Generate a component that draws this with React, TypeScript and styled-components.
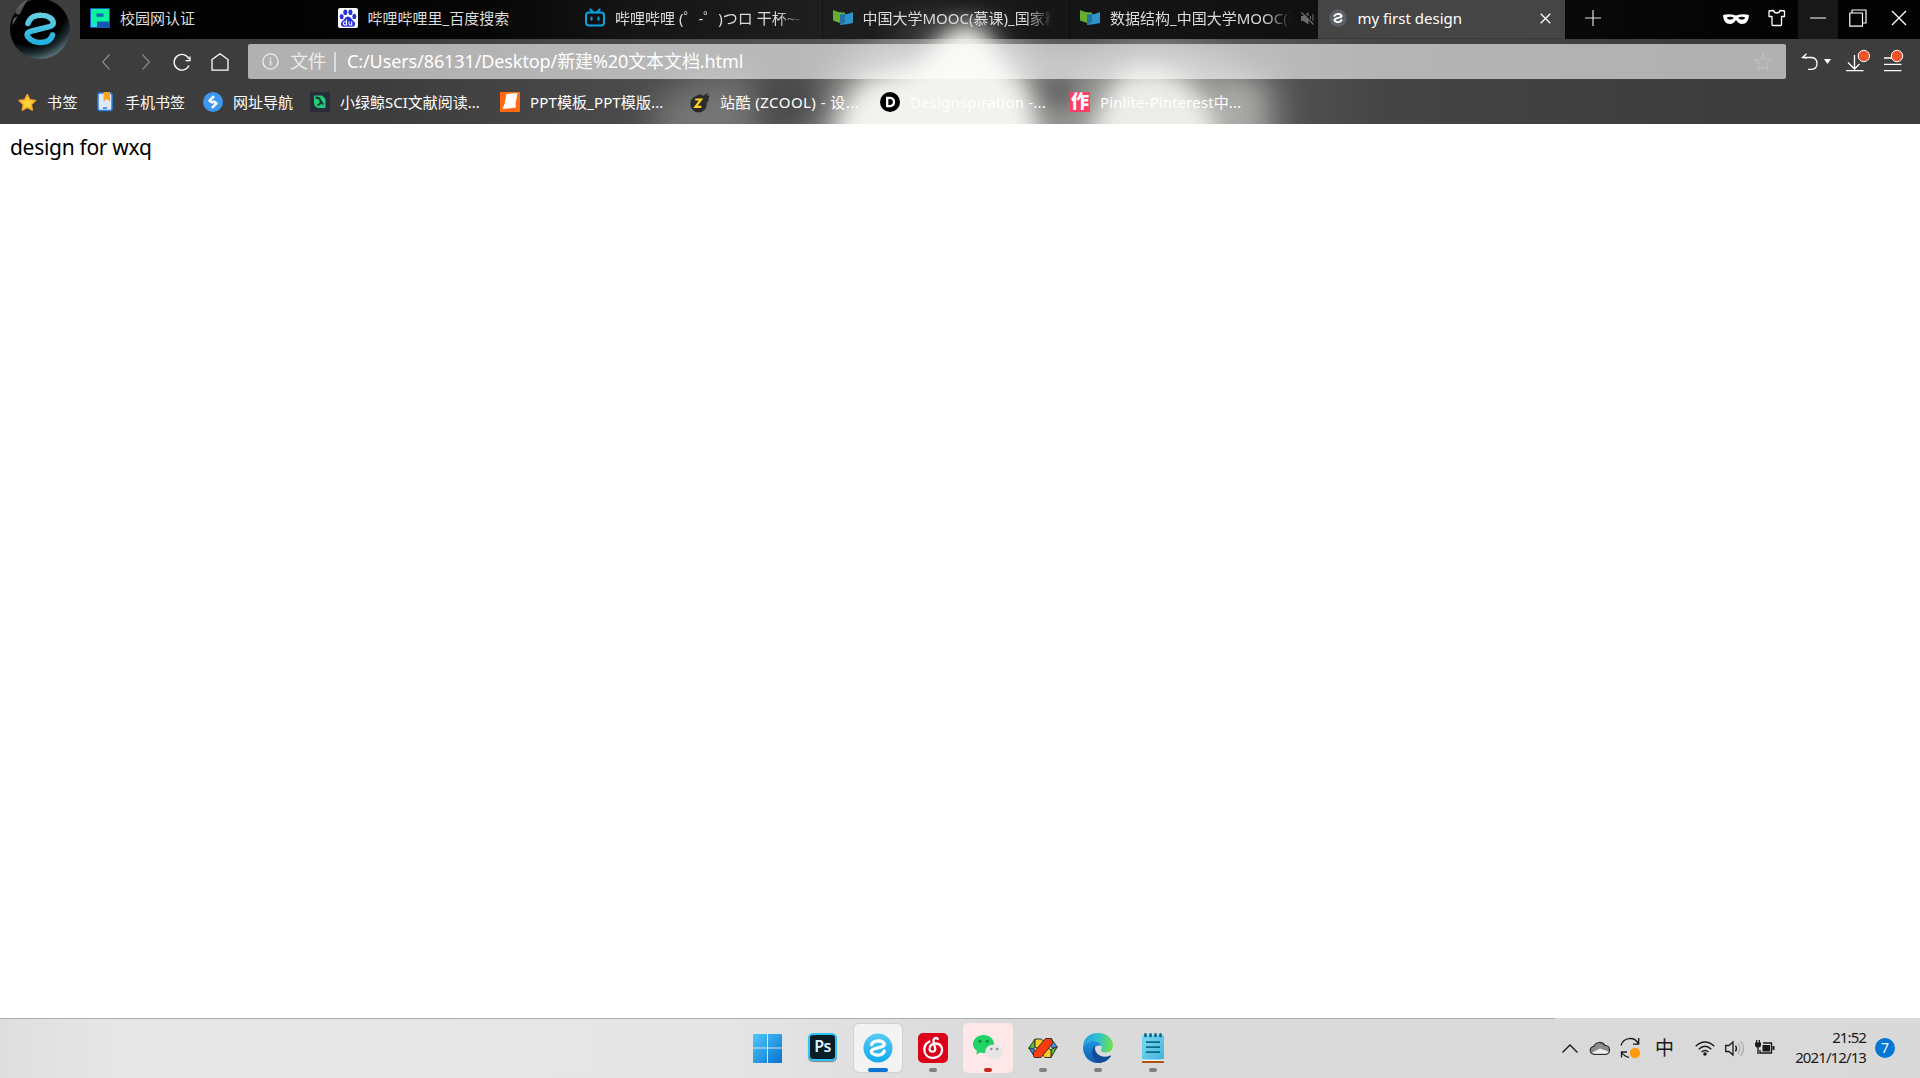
import React from "react";
import styled, { createGlobalStyle, css } from "styled-components";

const uiFont = `"Noto Sans", "Noto Sans CJK SC", sans-serif`;

const GlobalStyle = createGlobalStyle`
  *, *::before, *::after { box-sizing: border-box; }
  html, body { margin: 0; padding: 0; height: 100%; overflow: hidden; background: #fff; }
  svg { display: block; flex: none; overflow: visible; }
`;

const Screen = styled.div`
  width: 1920px;
  height: 1078px;
  display: flex;
  flex-direction: column;
  font-family: ${uiFont};
  background: #fff;
`;

const Header = styled.header`
  position: relative;
  isolation: isolate;
  display: flex;
  flex-direction: column;
  height: 124px;
  flex: none;
  overflow: hidden;
  background: #3d3d3d;
  color: #fff;
`;

const SkinLayer = styled.div`
  position: absolute;
  inset: 0;
  z-index: -1;
  overflow: hidden;
`;

const HeaderTop = styled.div`
  display: flex;
  height: 79px;
`;

const LogoSlot = styled.div`
  width: 80px;
  flex: none;
  display: flex;
  padding: 0 0 0 10px;
`;

const HeaderMain = styled.div`
  flex: 1;
  min-width: 0;
  display: flex;
  flex-direction: column;
`;

const TabStrip = styled.div`
  display: flex;
  height: 39px;
  flex: none;
`;

const Tab = styled.div<{ $active?: boolean; $line?: boolean }>`
  width: 247.5px;
  flex: none;
  display: flex;
  align-items: center;
  padding: 0 16px 3px 10px;
  background: ${(p) => (p.$active ? "#454545" : "transparent")};
  border-right: 1px solid ${(p) => (p.$line ? "rgba(0,0,0,.35)" : "transparent")};
  ${(p) => p.$active && css`border-bottom: 1px solid #3a3a3a; padding-bottom: 2px;`}
`;

const TabIcon = styled.span`
  width: 20px;
  height: 20px;
  margin-right: 10px;
  flex: none;
  display: grid;
  place-items: center;
`;

const TabTitle = styled.span<{ $fade?: boolean; $active?: boolean }>`
  flex: 1;
  min-width: 0;
  height: 24px;
  line-height: 24px;
  white-space: nowrap;
  overflow: hidden;
  font-size: 15px;
  color: ${(p) => (p.$active ? "#fff" : "#dcdcdc")};
  ${(p) => p.$fade && css`mask-image: linear-gradient(90deg, #000 calc(100% - 28px), transparent);`}
`;

const TabTail = styled.span`
  display: flex;
  margin-left: 9px;
  margin-right: -13px;
`;

const CloseTail = styled(TabTail)`
  margin-right: -3px;
`;

const WindowButtons = styled.div`
  flex: 1;
  display: flex;
  justify-content: flex-end;
`;

const WinButton = styled.div<{ $w: number; $lit?: boolean }>`
  width: ${(p) => p.$w}px;
  display: grid;
  place-items: center;
  padding-bottom: 3px;
  background: ${(p) => (p.$lit ? "#181818" : "transparent")};
`;

const NavRow = styled.div`
  display: flex;
  height: 40px;
  padding-top: 5px;
`;

const NavButtons = styled.div`
  width: 168px;
  flex: none;
  display: flex;
  align-items: center;
  padding-left: 17px;
`;

const NavButton = styled.div<{ $w: number }>`
  width: ${(p) => p.$w}px;
  flex: none;
  display: flex;
  justify-content: center;
  align-items: center;
`;

const AddressBar = styled.div`
  width: 1538px;
  flex: none;
  display: flex;
  align-items: center;
  padding: 0 14px 0 14px;
  border-radius: 2px;
  background: rgba(255, 255, 255, 0.6);
`;

const Scheme = styled.span`
  margin-left: 11px;
  width: 44px;
  font-size: 18px;
  line-height: 34px;
  color: #ececec;
  height: 36px;
`;

const Divider = styled.span`
  width: 2px;
  height: 20px;
  background: rgba(255, 255, 255, 0.55);
`;

const Url = styled.span`
  flex: 1;
  height: 36px;
  margin-left: 11px;
  font-size: 18px;
  line-height: 34px;
  letter-spacing: -0.1px;
  white-space: nowrap;
  color: #fff;
`;

const RightTools = styled.div`
  flex: 1;
  display: flex;
  align-items: center;
  padding-left: 14px;
`;

const BookmarkBar = styled.nav`
  display: flex;
  align-items: center;
  height: 45px;
  padding: 0 0 0 17px;
`;

const Bookmark = styled.div<{ $w: number }>`
  width: ${(p) => p.$w}px;
  flex: none;
  display: flex;
  align-items: center;
  height: 24px;
`;

const BookmarkIcon = styled.span`
  width: 20px;
  height: 20px;
  margin-right: 10px;
  display: grid;
  place-items: center;
  flex: none;
`;

const BookmarkLabel = styled.span<{ $ls?: number }>`
  font-size: 15px;
  line-height: 24px;
  height: 24px;
  white-space: nowrap;
  letter-spacing: ${(p) => p.$ls ?? 0}px;
  color: #fff;
`;

const Page = styled.main`
  flex: 1;
  padding: 9px 10px;
  background: #fff;
`;

const PageText = styled.p`
  margin: 0;
  font-size: 21px;
  line-height: 28px;
  letter-spacing: -0.3px;
  color: #000;
`;

const Taskbar = styled.footer`
  position: relative;
  display: flex;
  flex: none;
  height: 60px;
  background: linear-gradient(90deg, #dedede 0, #e7e7e7 120px, #e6e6e6 700px, #dadada 1000px, #d9d9d9 100%);
  color: #1a1a1a;
  &::before {
    content: "";
    position: absolute;
    left: 0;
    top: 0;
    width: 1555px;
    height: 1px;
    background: #adadad;
  }
`;

const TaskItems = styled.div`
  display: flex;
  width: 1180px;
  flex: none;
  padding: 5px 0 5px 740px;
`;

const TaskItem = styled.div`
  width: 55px;
  flex: none;
  display: flex;
  justify-content: center;
`;

const Tile = styled.div<{ $tone?: "active" | "alert" }>`
  width: ${(p) => (p.$tone === "alert" ? 50 : 48)}px;
  height: ${(p) => (p.$tone === "alert" ? 50 : 48)}px;
  margin-top: ${(p) => (p.$tone === "alert" ? 0 : 1)}px;
  border-radius: 5px;
  display: flex;
  flex-direction: column;
  align-items: center;
  justify-content: space-between;
  padding-top: ${(p) => (p.$tone === "alert" ? 10 : 9)}px;
  ${(p) => p.$tone === "active" && css`background: #f3f3f3; box-shadow: 0 0 0 1px rgba(0, 0, 0, 0.06);`}
  ${(p) => p.$tone === "alert" && css`background: #fde7e8;`}
`;

const Indicator = styled.span<{ $w: number; $color: string; $lift?: boolean }>`
  width: ${(p) => p.$w}px;
  height: 4px;
  border-radius: 2px;
  margin-bottom: ${(p) => (p.$lift ? 1 : 0)}px;
  background: ${(p) => p.$color};
`;

const Tray = styled.div`
  flex: 1;
  display: flex;
  align-items: center;
  padding-left: 381px;
`;

const TrayIcon = styled.span<{ $w: number }>`
  width: ${(p) => p.$w}px;
  flex: none;
  display: flex;
  justify-content: center;
  align-items: center;
`;

const InputMode = styled.span`
  width: 49px;
  flex: none;
  text-align: center;
  font-size: 19px;
  line-height: 24px;
  height: 25px;
`;

const Clock = styled.div`
  width: 85px;
  flex: none;
  text-align: right;
  font-size: 15px;
  line-height: 20px;
  letter-spacing: -0.9px;
  white-space: nowrap;
  padding-bottom: 2px;
`;

const CountBadge = styled.span`
  width: 20px;
  height: 20px;
  margin-left: 9px;
  border-radius: 50%;
  background: #0078d4;
  color: #fff;
  font-size: 14px;
  line-height: 20px;
  text-align: center;
`;

const Skin = () => (
  <svg width="1920" height="124" viewBox="0 0 1920 124">
    <defs>
      <linearGradient id="strip" x1="80" x2="1920" y1="0" y2="0" gradientUnits="userSpaceOnUse">
        <stop offset="0" stopColor="#000" />
        <stop offset=".22" stopColor="#060606" />
        <stop offset=".3" stopColor="#151515" />
        <stop offset=".4" stopColor="#1e1e1e" />
        <stop offset=".52" stopColor="#161616" />
        <stop offset=".68" stopColor="#101010" />
        <stop offset=".82" stopColor="#080808" />
        <stop offset=".95" stopColor="#020202" />
      </linearGradient>
      <linearGradient id="haze" x1="0" x2="1920" y1="0" y2="0" gradientUnits="userSpaceOnUse">
        <stop offset=".2" stopColor="#fff" stopOpacity="0" />
        <stop offset=".36" stopColor="#fff" stopOpacity=".09" />
        <stop offset=".5" stopColor="#fff" stopOpacity=".14" />
        <stop offset=".66" stopColor="#fff" stopOpacity=".12" />
        <stop offset=".72" stopColor="#fff" stopOpacity=".04" />
        <stop offset=".9" stopColor="#fff" stopOpacity="0" />
      </linearGradient>
      <filter id="b10" x="-50%" y="-60%" width="200%" height="220%" colorInterpolationFilters="sRGB"><feGaussianBlur stdDeviation="11" /></filter>
      <filter id="b18" x="-50%" y="-80%" width="200%" height="260%" colorInterpolationFilters="sRGB"><feGaussianBlur stdDeviation="16" /></filter>
      <clipPath id="lower"><rect y="39" width="1920" height="85" /></clipPath>
    </defs>
    <rect width="1920" height="124" fill="#3d3d3d" />
    <rect y="39" width="1920" height="85" fill="url(#haze)" />
    <rect x="80" width="1840" height="39" fill="url(#strip)" />
    <g clipPath="url(#lower)">
      <path d="M655 100q40-25 95-24l10 80H655z" fill="#8a8a88" opacity=".65" filter="url(#b18)" />
      <path d="M800 160L838 66 900 30H1014L1045 70 1100 58Q1150 30 1215 58L1275 84V160H800z" fill="#9c9c9a" opacity=".9" filter="url(#b18)" />
      <path d="M762 80h44l12 34h-46z" fill="#444" opacity=".6" filter="url(#b10)" />
    </g>
    <ellipse cx="950" cy="34" rx="60" ry="16" fill="#777" opacity=".5" filter="url(#b18)" />
    <g filter="url(#b10)">
      <path d="M954 26h26l26 38 22 26 20 90H826l16-70 22-30 50-14z" fill="#f2f2ee" />
      <path d="M1094 124l18-40 22-14h26l28 12 24 28 10 70H1070z" fill="#ecece8" />
      <path d="M1214 88h40v100h-40z" fill="#aaaaa7" />
    </g>
    <path d="M1036 78h42l-8 30h-18z" fill="#484848" opacity=".75" filter="url(#b10)" />
  </svg>
);

const stroke = { fill: "none", stroke: "#fff", strokeWidth: 1.5 } as const;

const BrowserLogo = () => (
  <svg width="60" height="59" viewBox="0 0 60 59">
    <defs>
      <radialGradient id="orb" gradientUnits="userSpaceOnUse" cx="18" cy="6" r="62">
        <stop offset=".62" stopColor="#000" />
        <stop offset=".76" stopColor="#1c2a2f" />
        <stop offset=".9" stopColor="#5b727a" />
        <stop offset="1" stopColor="#8ca5ae" />
      </radialGradient>
      <linearGradient id="orbE" x1="0" x2="0" y1="0" y2="1">
        <stop offset="0" stopColor="#66cde2" />
        <stop offset="1" stopColor="#22b0e0" />
      </linearGradient>
    </defs>
    <circle cx="30" cy="29" r="30" fill="url(#orb)" />
    <path d="M5 13Q8 5 17 0L11 12 9 15z" fill="#8a8a8a" opacity=".6" />
    <path d="M2.500 25Q2.500 20 4 18L8 16z" fill="#999" opacity=".6" />
    <path d="M18 23.500C20 17 26 14.800 32 15.300C39 15.600 43.500 19.500 43.200 23.300C43 25.300 41.500 26 39.500 26.600L21 31.300C17 32.500 16 34.500 18.500 37.500C21.500 41 27 43 33 42.300C38 41.800 41.500 39 42.500 35" fill="none" stroke="url(#orbE)" strokeWidth="5.600" strokeLinecap="round" strokeLinejoin="round" />
  </svg>
);

const CampusIcon = () => (
  <svg width="20" height="20" viewBox="0 0 20 20">
    <rect width="20" height="20" fill="#1555b4" />
    <path d="M1 1H19V13.500H7V19H1z" fill="#0bf3a0" />
    <path d="M6.500 5.500H13.500V8.800H6.500z" fill="#1463b4" />
    <path d="M1 14v5h6v-3z" fill="#20e0d8" />
  </svg>
);

const PawIcon = () => (
  <svg width="20" height="20" viewBox="0 0 20 20">
    <rect width="20" height="20" rx="2" fill="#fff" />
    <g fill="#2a32dc">
      <ellipse cx="3.700" cy="8.600" rx="2" ry="2.700" />
      <ellipse cx="7.300" cy="4.300" rx="2" ry="2.800" />
      <ellipse cx="12.400" cy="4.300" rx="2" ry="2.800" />
      <ellipse cx="16.300" cy="8.400" rx="2" ry="2.700" />
      <path d="M10 8.500c2.500 0 3 2.300 5 4s2.500 3 1.800 4.700-2.600 2-6.800 1.300c-4.200.7-6 .4-6.800-1.300s-.2-3 1.800-4.700 2.500-4 5-4z" />
    </g>
    <path d="M8.500 11.500v5.500H7a1.500 1.500 0 010-3.300h1.500M11 13.500v2.600q0 .9 1 .9h1.700v-3.500" fill="none" stroke="#fff" strokeWidth="1.100" />
  </svg>
);

const TvIcon = () => (
  <svg width="20" height="20" viewBox="0 0 20 20">
    <g fill="none" stroke="#08a5e0" strokeWidth="2" strokeLinecap="round">
      <rect x="1" y="4.500" width="18" height="13" rx="3" />
      <path d="M5.300 1.500l2.700 2.700M14.700 1.500L12 4.200M6.500 9.500v2.200M13.500 9.500v2.200" />
    </g>
  </svg>
);

const MoocIcon = () => (
  <svg width="20" height="20" viewBox="0 0 20 20">
    <path d="M0 2Q6 5 12 4.500V15.500Q5 15 0 12.500z" fill="#67ad33" />
    <path d="M7 6.500Q14 7 20 4V15Q14 16.500 7 17z" fill="#2f93cb" />
    <path d="M7 6.500H12V14L7 17z" fill="#23729a" />
  </svg>
);

const SmallE = () => (
  <svg width="18" height="18" viewBox="0 0 30 30">
    <circle cx="15" cy="15" r="14.500" fill="#5d5f68" />
    <path d="M9 11.500C11 7.500 19.500 7.500 21 11C21.500 13 20 13.500 18 14L11.500 16C8.800 17 8.500 18.300 9.800 20C13 23 20 22.300 21 18.500" fill="none" stroke="#fff" strokeWidth="3.200" strokeLinecap="round" />
  </svg>
);

const MuteIcon = () => (
  <svg width="13" height="13" viewBox="0 0 13 13">
    <path d="M0 4h2.500l1.500-1 3.500 3.800V12.500L2.500 9H0zM5 2L7.500.2V4.500z" fill="#6c6c6c" />
    <path d="M.5.500l12 12" stroke="#6c6c6c" strokeWidth="1.200" />
    <path d="M9.500 4v3M12 2v7" stroke="#6c6c6c" strokeWidth="1" />
  </svg>
);

const Cross = ({ size }: { size: number }) => (
  <svg width={size} height={size} viewBox="0 0 16 16">
    <path d="M1 1L15 15M15 1L1 15" {...stroke} strokeWidth={size < 14 ? 1.8 : 1.400} />
  </svg>
);

const DotTool = ({ kind }: { kind: "down" | "menu" }) => (
  <svg width="24" height="24" viewBox="0 0 24 24">
    {kind === "down" ? (
      <path d="M9.500 5v13.500M3 12.500l6.500 6.500 5-5M1 20.700h17.500" {...stroke} strokeWidth="1.300" />
    ) : (
      <path d="M1 8h17.500M1 14.300h17.500M1 20.700h17.500" {...stroke} strokeWidth="1.300" />
    )}
    <circle cx={kind === "down" ? 18.800 : 14} cy="6" r="5.700" fill="#f2522a" stroke="#fff" strokeWidth="1" />
  </svg>
);

const StarBookmark = () => (
  <svg width="20" height="20" viewBox="0 0 20 20">
    <path d="M10.300 2.500l2.500 5.200 5.700.8-4.200 4 1 5.600-5-2.800-5 2.800 1-5.600-4.200-4 5.700-.8z" fill="#ffd03a" stroke="#f9a825" strokeWidth="1.500" strokeLinejoin="round" />
  </svg>
);
const PhoneBookmark = () => (
  <svg width="20" height="20" viewBox="0 0 20 20">
    <rect x="3" y="1" width="14" height="17.500" rx="2" fill="#dce9fb" stroke="#2a7de1" strokeWidth="1.500" />
    <path d="M8.500 0H15V9.500L11.700 7 8.500 9.500z" fill="#f9a21b" />
    <path d="M8 16h4" stroke="#1660c4" strokeWidth="1.300" />
  </svg>
);
const NaviBookmark = () => (
  <svg width="20" height="20" viewBox="0 0 20 20">
    <circle cx="10" cy="10" r="10" fill="#3d98f2" />
    <path d="M11 4.200L6.500 8.700l3.500 2.300M9 15.800l4.500-4.500-3.500-2.300" fill="none" stroke="#fff" strokeWidth="2.600" strokeLinejoin="round" />
  </svg>
);
const WhaleBookmark = () => (
  <svg width="20" height="20" viewBox="0 0 20 20">
    <rect width="20" height="20" fill="#292b38" />
    <path d="M4 3.500h8l3.500 3.500V16H8.500Q4 15 4 11z" fill="#20cb79" />
    <path d="M5.500 5.500Q10 5.500 10.500 9T7.500 13M10.500 8.500l2.500 4" fill="none" stroke="#1c2b30" strokeWidth="1.800" />
  </svg>
);
const PptBookmark = () => (
  <svg width="20" height="20" viewBox="0 0 20 20">
    <rect width="20" height="20" fill="#ff6a13" />
    <path d="M6.500 2L17.500 1 15.500 12l.5 3.500L2.500 17l2-5z" fill="#fff" />
  </svg>
);
const ZcoolBookmark = () => (
  <svg width="20" height="20" viewBox="0 0 20 20">
    <path d="M12 2l-.5 2.500L18.500.8 16.800 4l3-.8L18 7.500l1.500-.2-2.800 3.700A8.200 8.200 0 11.500 11C.5 6 6 3 12 2z" fill="#2b2b2b" />
    <path d="M5.200 7.500H11L5.500 14.800H11.300" fill="none" stroke="#ffd21f" strokeWidth="2.200" />
  </svg>
);
const DBookmark = () => (
  <svg width="20" height="20" viewBox="0 0 20 20">
    <circle cx="10" cy="10" r="10" fill="#000" />
    <path d="M7.200 5.800H10Q14 6.300 14 10T10 14.200H7.200z" fill="none" stroke="#fff" strokeWidth="2.300" />
  </svg>
);

const PinBadge = styled.span`
  width: 20px;
  height: 20px;
  background: #fe3f65;
  color: #fff;
  font-size: 18px;
  font-weight: 900;
  line-height: 19px;
  text-align: center;
`;

const PsBadge = styled.span`
  width: 29px;
  height: 28px;
  border: 2px solid #31c5f4;
  border-radius: 5px;
  background: #071d26;
  color: #dff1ff;
  font-size: 16px;
  font-weight: 600;
  line-height: 23px;
  text-align: center;
  letter-spacing: -0.5px;
  box-shadow: 0 1px 1px rgba(0, 0, 0, 0.45);
`;

const WindowsIcon = () => (
  <svg width="30" height="30" viewBox="0 0 30 30">
    <defs>
      <linearGradient id="win" x1="0" y1="0" x2="30" y2="30" gradientUnits="userSpaceOnUse">
        <stop offset="0" stopColor="#4fc9fb" />
        <stop offset="1" stopColor="#0670d0" />
      </linearGradient>
    </defs>
    <path d="M0 2q0-1 1-1H14V14.500H0zM15 1H28q1 0 1 1V14.500H15zM0 15.500H14V30H1q-1 0-1-1zM15 15.500H29V29q0 1-1 1H15z" fill="url(#win)" />
  </svg>
);
const TaskE = () => (
  <svg width="30" height="30" viewBox="0 0 30 30">
    <defs>
      <linearGradient id="te" x1="0" x2="0" y1="0" y2="1">
        <stop offset="0" stopColor="#5acbf5" />
        <stop offset="1" stopColor="#12a8f0" />
      </linearGradient>
    </defs>
    <circle cx="15" cy="15" r="14.500" fill="url(#te)" />
    <path d="M8.500 11.700C10.500 6.800 19.500 6.800 21.300 10.800C21.600 13 20 13.500 18 14L11 16C8 17 7.500 18.300 9.200 20.300C13 23.500 20 22.500 21.300 18" fill="none" stroke="#fff" strokeWidth="3.200" strokeLinecap="round" />
  </svg>
);
const NetEase = () => (
  <svg width="30" height="30" viewBox="0 0 30 30">
    <rect width="30" height="30" rx="5" fill="#dd001b" />
    <path d="M19.800 5.800C17.500 4 15 5.800 15.500 8.500L17.200 15.500C17.800 19 12.500 20 11.500 16.500C11 12.500 14.500 10.500 17.500 10.500C22.500 10.500 24.500 14.500 24 17.500C23 26.500 9.500 27.500 6.800 19.500C5.300 14 8 10.300 11.500 8.500" fill="none" stroke="#fff" strokeWidth="2.300" strokeLinecap="round" />
  </svg>
);
const WeChat = () => (
  <svg width="30" height="30" viewBox="0 0 30 30">
    <path d="M10.500 2C4.500 2 0 6 0 11c0 3 1.600 5.300 4 7l-.8 3.500L7 19.600c1.200.3 2.300.4 3.500.4C16.500 20 21 16 21 11S16.500 2 10.500 2z" fill="#1fd367" />
    <path d="M21 11.500c-5 0-8.800 3.200-8.800 7.300S16 26 21 26c1 0 2-.1 2.900-.4l3.200 1.700-.6-2.900c2-1.300 3.300-3.300 3.300-5.600 0-4.100-3.800-7.300-8.800-7.300z" fill="#e6e6e6" />
    <g fill="#14843c"><circle cx="7" cy="8.300" r="1.500" /><circle cx="14.300" cy="8.300" r="1.500" /></g>
    <g fill="#8a8a8a"><circle cx="18.300" cy="16" r="1.200" /><circle cx="24.200" cy="16" r="1.200" /></g>
  </svg>
);
const Ribbon = () => (
  <svg width="30" height="30" viewBox="0 0 30 30">
    <g stroke="#33332a" strokeWidth="1" strokeLinejoin="round">
      <path d="M.8 15L7 6v8l-3 5z" fill="#4fc92f" />
      <path d="M7 6h6.500l3.500 4-6 6-4-2z" fill="#ffc928" />
      <path d="M.8 15l6.200 9.500 2-4-4-5z" fill="#2f86ea" />
      <path d="M23 5.500l6.200 8.500-5 1-2-4z" fill="#4596f4" />
      <path d="M29.200 14l-6.200 10.500v-8z" fill="#4fc92f" />
      <path d="M14 21l6-6 3 2v7.500h-6z" fill="#ffc928" />
      <path d="M5.500 23.500v-4L17.500 5.500h6L25 10 13 24.500H6.500z" fill="#fb3a10" />
    </g>
  </svg>
);
const Edge = () => (
  <svg width="30" height="30" viewBox="0 0 30 30">
    <defs>
      <linearGradient id="eg1" x1="0" y1=".3" x2="1" y2=".4">
        <stop offset="0" stopColor="#1f9de0" />
        <stop offset=".5" stopColor="#2fc3cf" />
        <stop offset="1" stopColor="#6fe04b" />
      </linearGradient>
      <linearGradient id="eg2" x1="0" y1="0" x2="0" y2="1">
        <stop offset="0" stopColor="#1b96e0" />
        <stop offset="1" stopColor="#0f57ae" />
      </linearGradient>
    </defs>
    <path d="M0 14C0 6 6 0 15 0s15 6 15 12.500c0 5-4 7-7.500 7s-5-1.500-4.500-2.500c2-3 .5-7-4.500-8.500C8 7 2 9 0 14z" fill="url(#eg1)" />
    <path d="M0 14C2 9 8 7 13.500 8.500c2.500.7 4.500 2.500 5 4.500-6-2-9 3-7 8 2.500 6 10 6.500 16 2C24.500 28 20 30 15 30 6 30 0 23 0 14z" fill="url(#eg2)" />
    <path d="M12 12.500C8 15.500 7.500 24.500 15 30c5 0 9.800-2.300 12.800-6.500.4-.8-.2-1.200-1-.8C20 25.500 10.500 22 12 12.500z" fill="#124c94" />
  </svg>
);
const Notepad = () => (
  <svg width="30" height="30" viewBox="0 0 30 30">
    <defs>
      <linearGradient id="np" x1="0" y1="0" x2="1" y2="1">
        <stop offset="0" stopColor="#7bdcf0" />
        <stop offset="1" stopColor="#45b3dc" />
      </linearGradient>
    </defs>
    <rect x="4" y="25" width="22" height="5" rx="1" fill="#b04f0c" />
    <rect x="4" y="24" width="22" height="4" fill="#e8f4f8" />
    <rect x="4" y="2" width="22" height="24.500" rx="1.500" fill="url(#np)" />
    <path d="M8 9.200h14M8 14.200h14M8 19.200h14" stroke="#0d6a8c" strokeWidth="1.800" />
    <g fill="#116a90">{[7.500, 12.500, 17.500, 22.500].map((x) => <ellipse key={x} cx={x} cy="2.300" rx="1.500" ry="2.200" />)}</g>
  </svg>
);

const tabs = [
  { icon: <CampusIcon />, title: "校园网认证" },
  { icon: <PawIcon />, title: "哔哩哔哩里_百度搜索" },
  { icon: <TvIcon />, title: "哔哩哔哩 (゜-゜)つロ 干杯~-", fade: true, line: true },
  { icon: <MoocIcon />, title: "中国大学MOOC(慕课)_国家精", fade: true, line: true },
];

const bookmarks = [
  { icon: <StarBookmark />, label: "书签", w: 78, ls: 0.5 },
  { icon: <PhoneBookmark />, label: "手机书签", w: 108 },
  { icon: <NaviBookmark />, label: "网址导航", w: 107 },
  { icon: <WhaleBookmark />, label: "小绿鲸SCI文献阅读...", w: 190 },
  { icon: <PptBookmark />, label: "PPT模板_PPT模版...", w: 190, ls: 0.13 },
  { icon: <ZcoolBookmark />, label: "站酷 (ZCOOL) - 设...", w: 190, ls: 0.45 },
  { icon: <DBookmark />, label: "Designspiration -...", w: 190, ls: 0.2 },
  { icon: <PinBadge>作</PinBadge>, label: "Pinlite-Pinterest中...", w: 190, ls: 0.12 },
];

type Task = { icon: React.ReactNode; tone?: "active" | "alert"; bar?: [number, string] };
const tasks: Task[] = [
  { icon: <WindowsIcon /> },
  { icon: <PsBadge>Ps</PsBadge> },
  { icon: <TaskE />, tone: "active", bar: [20, "#0a74d2"] },
  { icon: <NetEase />, bar: [8, "#808080"] },
  { icon: <WeChat />, tone: "alert", bar: [8, "#c42b1c"] },
  { icon: <Ribbon />, bar: [8, "#808080"] },
  { icon: <Edge />, bar: [8, "#808080"] },
  { icon: <Notepad />, bar: [8, "#808080"] },
];

export default function App() {
  return (
    <Screen>
      <GlobalStyle />
      <Header>
        <SkinLayer><Skin /></SkinLayer>
        <HeaderTop>
          <LogoSlot><BrowserLogo /></LogoSlot>
          <HeaderMain>
            <TabStrip>
              {tabs.map((t) => (
                <Tab key={t.title} $line={t.line}>
                  <TabIcon>{t.icon}</TabIcon>
                  <TabTitle $fade={t.fade}>{t.title}</TabTitle>
                </Tab>
              ))}
              <Tab>
                <TabIcon><MoocIcon /></TabIcon>
                <TabTitle $fade>数据结构_中国大学MOOC(慕</TabTitle>
                <TabTail><MuteIcon /></TabTail>
              </Tab>
              <Tab $active>
                <TabIcon><SmallE /></TabIcon>
                <TabTitle $active>my first design</TabTitle>
                <CloseTail><Cross size={11} /></CloseTail>
              </Tab>
              <WinButton $w={55}>
                <svg width="16" height="16" viewBox="0 0 16 16"><path d="M8 0v16M0 8h16" {...stroke} stroke="#ddd" strokeWidth="1.200" /></svg>
              </WinButton>
              <WindowButtons>
                <WinButton $w={40}>
                  <svg width="26" height="12" viewBox="0 0 26 12">
                    <path fillRule="evenodd" d="M0 3Q6 1.500 13 3.500 20 1.500 26 3 25.500 12 19 12 15.500 12 13 8 10.500 12 7 12 .5 12 0 3zM3.500 6Q7 9.500 11 6 7 3.300 3.500 6zM15 6Q19 9.500 22.500 6 19 3.300 15 6z" fill="#fff" />
                  </svg>
                </WinButton>
                <WinButton $w={42}>
                  <svg width="18" height="18" viewBox="0 0 18 18">
                    <path d="M5.500 1.500L1 2V7.500H4V15.500Q4 16.500 5 16.500H12.500Q13.500 16.500 13.500 15.500V7.500H16.500V2L12 1.500Q11.500 4 8.800 4T5.500 1.500z" {...stroke} strokeLinejoin="round" strokeWidth="1.300" />
                  </svg>
                </WinButton>
                <WinButton $w={40} $lit>
                  <svg width="16" height="16" viewBox="0 0 16 16"><path d="M0 8h16" stroke="#b5b5b5" strokeWidth="1.500" /></svg>
                </WinButton>
                <WinButton $w={40}>
                  <svg width="18" height="18" viewBox="0 0 18 18">
                    <path d="M.8 4H13.500V17.200H.8zM3 4V1H17V14H13.500" {...stroke} strokeWidth="1.200" strokeLinejoin="round" />
                  </svg>
                </WinButton>
                <WinButton $w={42}><Cross size={16} /></WinButton>
              </WindowButtons>
            </TabStrip>
            <NavRow>
              <NavButtons>
                <NavButton $w={18}><svg width="8" height="16" viewBox="0 0 8 16"><path d="M7.500.5L.7 8l6.800 7.500" fill="none" stroke="#8a8a8a" strokeWidth="1.200" /></svg></NavButton>
                <NavButton $w={62}><svg width="8" height="16" viewBox="0 0 8 16"><path d="M.5.500L7.300 8 .5 15.500" fill="none" stroke="#8a8a8a" strokeWidth="1.200" /></svg></NavButton>
                <NavButton $w={10}>
                  <svg width="18" height="18" viewBox="0 0 18 18"><path d="M16 6A7.800 7.800 0 1016 12.500M17 3.500V7.700H12.500" {...stroke} strokeWidth="1.300" /></svg>
                </NavButton>
                <NavButton $w={66}>
                  <svg width="18" height="18" viewBox="0 0 18 18"><path d="M1 6.500L9 .8l8 5.700V17.200H1z" {...stroke} strokeWidth="1.300" /></svg>
                </NavButton>
              </NavButtons>
              <AddressBar>
                <svg width="17" height="17" viewBox="0 0 17 17"><circle cx="8.500" cy="8.500" r="7.600" fill="none" stroke="#ececec" strokeWidth="1.400" /><path d="M8.500 7.300v5.200M8.500 4.500v1.600" stroke="#ececec" strokeWidth="1.500" /></svg>
                <Scheme>文件</Scheme>
                <Divider />
                <Url>C:/Users/86131/Desktop/新建%20文本文档.html</Url>
                <svg width="18" height="18" viewBox="0 0 18 18"><path d="M9 1l2.300 5.300 5.900.6-4.400 4 1.300 5.900L9 13.800 3.900 16.800l1.300-5.900-4.400-4 5.900-.6z" fill="none" stroke="#bfbfbf" strokeWidth="1.200" /></svg>
              </AddressBar>
              <RightTools>
                <NavButton $w={20}>
                  <svg width="18" height="18" viewBox="0 0 18 18"><path d="M5.500.8L1.500 4.500l4.500.5M1.500 4.500H10.500Q16 5 16 10.500T10.500 16.300H7" {...stroke} strokeWidth="1.300" /></svg>
                </NavButton>
                <NavButton $w={14}><svg width="7" height="5" viewBox="0 0 7 5"><path d="M0 0h7L3.500 5z" fill="#fff" /></svg></NavButton>
                <NavButton $w={46}><DotTool kind="down" /></NavButton>
                <NavButton $w={29}><DotTool kind="menu" /></NavButton>
              </RightTools>
            </NavRow>
          </HeaderMain>
        </HeaderTop>
        <BookmarkBar>
          {bookmarks.map((b) => (
            <Bookmark key={b.label} $w={b.w}>
              <BookmarkIcon>{b.icon}</BookmarkIcon>
              <BookmarkLabel $ls={b.ls}>{b.label}</BookmarkLabel>
            </Bookmark>
          ))}
        </BookmarkBar>
      </Header>
      <Page>
        <PageText>design for wxq</PageText>
      </Page>
      <Taskbar>
        <TaskItems>
          {tasks.map((t, i) => (
            <TaskItem key={i}>
              <Tile $tone={t.tone}>
                {t.icon}
                {t.bar && <Indicator $w={t.bar[0]} $color={t.bar[1]} $lift={t.tone === "alert"} />}
              </Tile>
            </TaskItem>
          ))}
        </TaskItems>
        <Tray>
          <TrayIcon $w={18}><svg width="16" height="9" viewBox="0 0 16 9"><path d="M.5 8.500L8 1l7.500 7.500" fill="none" stroke="#1a1a1a" strokeWidth="1.400" /></svg></TrayIcon>
          <TrayIcon $w={41}>
            <svg width="20" height="14" viewBox="0 0 20 14">
              <path d="M4.500 13.300A4 4 0 014 5.300 6 6 0 0114.800 4.500 4.400 4.400 0 0115.500 13.300z" fill="#8c8c8c" stroke="#2b2b2b" strokeWidth="1.200" />
              <path d="M4.500 12.700Q3 12.500 2.200 11.500L10 7.500l8.700 3Q17.500 12.700 15.500 12.700z" fill="#eee" />
            </svg>
          </TrayIcon>
          <TrayIcon $w={20}>
            <svg width="20" height="20" viewBox="0 0 20 20">
              <path d="M1 7.500A9.300 9.300 0 0118.500 6M18.700 0v6.200H13M1.500 19.500V14H7M1.500 14Q4 18.500 9 19.300" fill="none" stroke="#1a1a1a" strokeWidth="1.300" />
              <circle cx="15" cy="15" r="5.200" fill="#ff9a0a" />
            </svg>
          </TrayIcon>
          <InputMode>中</InputMode>
          <TrayIcon $w={32}>
            <svg width="20" height="15" viewBox="0 0 20 15">
              <g fill="none" stroke="#1a1a1a" strokeWidth="1.400">
                <path d="M.7 5.200Q10-3.200 19.300 5.200M3.700 8.200Q10 2.500 16.300 8.200M6.500 11Q10 8 13.500 11" />
              </g>
              <circle cx="10" cy="13" r="1.800" fill="#1a1a1a" />
            </svg>
          </TrayIcon>
          <TrayIcon $w={28}>
            <svg width="20" height="17" viewBox="0 0 20 17">
              <path d="M.7 5.500H4L8 2v13L4 11.500H.7z" fill="none" stroke="#1a1a1a" strokeWidth="1.300" />
              <path d="M10.500 5.500Q12.500 8.500 10.500 11.500" fill="none" stroke="#1a1a1a" strokeWidth="1.300" />
              <path d="M13 3Q16.500 8.500 13 14M15.500 1Q21.500 8.500 15.500 16" fill="none" stroke="#aaa" strokeWidth="1.200" />
            </svg>
          </TrayIcon>
          <TrayIcon $w={32}>
            <svg width="20" height="16" viewBox="0 0 20 16">
              <path d="M8 3H16.500V13H5V10" fill="none" stroke="#1a1a1a" strokeWidth="1.400" />
              <path d="M7.500 5H15V11.500H7.500zM17.500 6h2v4h-2zM0 2.500H6V5Q6 7.500 3.700 7.500V14H2.300V7.500Q0 7.500 0 5zM1 0H2.300V3H1zM3.700 0H5V3H3.700z" fill="#1a1a1a" />
            </svg>
          </TrayIcon>
          <Clock>
            <div>21:52</div>
            <div>2021/12/13</div>
          </Clock>
          <CountBadge>7</CountBadge>
        </Tray>
      </Taskbar>
    </Screen>
  );
}
